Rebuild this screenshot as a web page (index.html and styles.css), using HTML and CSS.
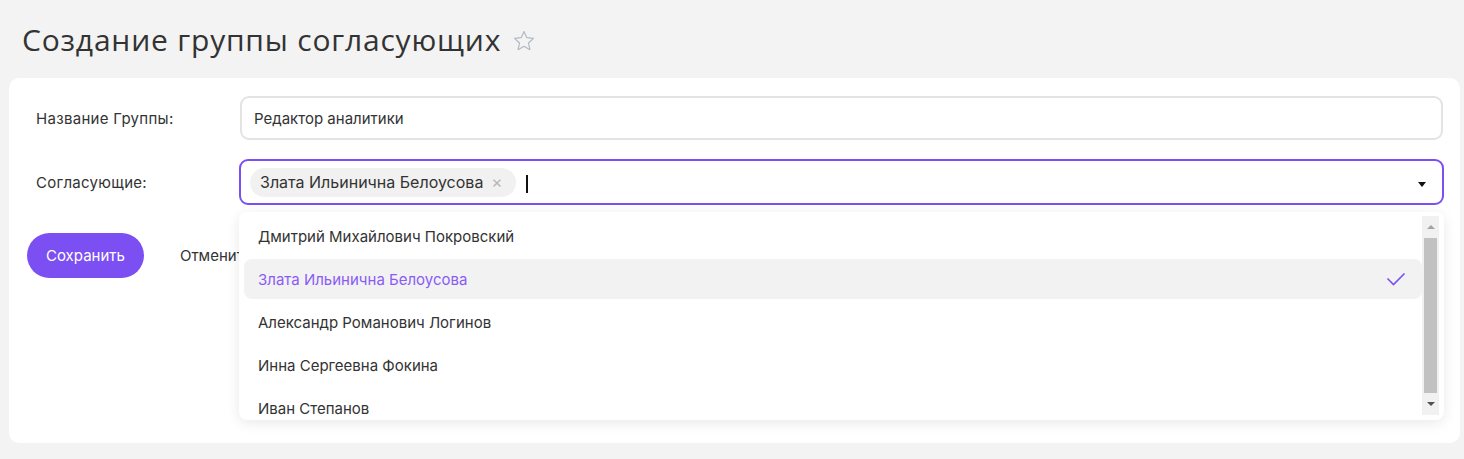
FILE: index.html
```html
<!DOCTYPE html>
<html lang="ru">
<head>
    <meta charset="UTF-8">
    <meta name="viewport" content="width=device-width, initial-scale=1.0">
    <title>Создание группы согласующих</title>
    <link rel="stylesheet" href="styles.css">
</head>
<body>
    <h1 class="page-title">
        Создание группы согласующих
        <svg class="star" width="24" height="24" viewBox="0 0 24 24">
            <path d="M12 2.5l2.8 6.2 6.7.7-5 4.6 1.4 6.7L12 17.3l-5.9 3.4 1.4-6.7-5-4.6 6.7-.7z" fill="none" stroke="#b3b9c2" stroke-width="1.2" stroke-linejoin="round"/>
        </svg>
    </h1>

    <div class="card">
        <form class="group-form">
            <label class="form-label" for="group-name">Название Группы:</label>
            <input class="text-input" type="text" id="group-name" value="Редактор аналитики">

            <label class="form-label">Согласующие:</label>
            <div class="select-wrap">
                <div class="select-box">
                    <span class="tag">Злата Ильинична Белоусова <span class="tag-remove">×</span></span>
                    <span class="cursor"></span>
                    <span class="select-arrow"></span>
                </div>

                <div class="dropdown">
                    <ul class="options">
                        <li class="option">Дмитрий Михайлович Покровский</li>
                        <li class="option selected">Злата Ильинична Белоусова
                            <svg width="20" height="14" viewBox="0 0 20 14"><path d="M1.5 6.5l6 6 11-11" fill="none" stroke="#7b4ff2" stroke-width="1.6"/></svg>
                        </li>
                        <li class="option">Александр Романович Логинов</li>
                        <li class="option">Инна Сергеевна Фокина</li>
                        <li class="option">Иван Степанов</li>
                    </ul>
                    <div class="scrollbar">
                        <span class="arrow-up"></span>
                        <span class="thumb"></span>
                        <span class="arrow-down"></span>
                    </div>
                </div>
            </div>

            <div class="actions">
                <button type="submit" class="save-btn">Сохранить</button>
                <button type="button" class="cancel-btn">Отменить</button>
            </div>
        </form>
    </div>
</body>
</html>
```

FILE: styles.css
```css
body {
    margin: 0;
    background-color: #f3f3f3;
    font-family: Inter, "Noto Sans", sans-serif;
    color: #333;
}
.page-title {
    display: flex;
    align-items: center;
    gap: 11px;
    margin: 0;
    padding: 15px 22px 0;
    height: 63px;
    box-sizing: border-box;
    font-family: "Open Sans", sans-serif;
    font-weight: 400;
    font-size: 30px;
    letter-spacing: 0.8px;
    color: #333;
}
.star {
    margin-top: 4px;
}
.card {
    background-color: #fff;
    border-radius: 10px;
    margin: 15px 4px 0 9px;
    padding: 18px 17px 0 27px;
    height: 365px;
    box-sizing: border-box;
}
.group-form {
    display: grid;
    grid-template-columns: 204px 1fr;
    row-gap: 19px;
    align-items: center;
}
.form-label {
    font-size: 15px;
    letter-spacing: 0.3px;
    color: #333;
}
.text-input {
    height: 44px;
    box-sizing: border-box;
    border: 2px solid #e3e3e3;
    border-radius: 9px;
    padding: 0 12px;
    font-family: inherit;
    font-size: 15px;
    color: #333;
    outline: none;
}
.select-wrap {
    position: relative;
    margin-left: -1px;
    margin-right: -1px;
}
.select-box {
    display: flex;
    align-items: center;
    height: 46px;
    box-sizing: border-box;
    border: 2px solid #7b4ff2;
    border-radius: 9px;
    padding: 0 16px 0 9px;
}
.tag {
    display: inline-flex;
    align-items: center;
    gap: 8px;
    height: 29px;
    padding: 0 13px 0 10px;
    background-color: #f1f1f1;
    border-radius: 15px;
    font-size: 16px;
    color: #333;
}
.tag-remove {
    color: #b5b5b5;
    font-size: 17px;
}
.cursor {
    width: 2px;
    height: 18px;
    background-color: #111;
    margin-left: 10px;
    margin-top: 4px;
}
.select-arrow {
    margin-left: auto;
    margin-top: 4px;
    border-left: 4px solid transparent;
    border-right: 4px solid transparent;
    border-top: 5px solid #111;
}
.dropdown {
    position: absolute;
    top: 53px;
    left: 0;
    right: 0;
    height: 208px;
    display: flex;
    padding: 4px 5px 4px 5px;
    box-sizing: border-box;
    background-color: #fff;
    border-radius: 8px;
    box-shadow: 0 3px 14px rgba(0, 0, 0, 0.09);
    overflow: hidden;
}
.options {
    flex: 1;
    list-style: none;
    margin: 0;
    padding: 0;
    display: flex;
    flex-direction: column;
    gap: 3px;
}
.option {
    display: flex;
    align-items: center;
    justify-content: space-between;
    flex-shrink: 0;
    height: 40px;
    padding: 0 16px 0 14px;
    border-radius: 8px;
    font-size: 15px;
    color: #333;
}
.option.selected {
    background-color: #f2f2f2;
    color: #8a5cf6;
}
.scrollbar {
    width: 17px;
    display: flex;
    flex-direction: column;
    align-items: center;
    background-color: #f1f1f1;
    margin-bottom: 1px;
}
.thumb {
    width: 13px;
    height: 155px;
    background-color: #c1c1c1;
}
.arrow-up, .arrow-down {
    flex: 1;
    display: flex;
    align-items: center;
}
.arrow-up::before {
    content: "";
    border-left: 4px solid transparent;
    border-right: 4px solid transparent;
    border-bottom: 4px solid #a3a3a3;
}
.arrow-down::before {
    content: "";
    border-left: 4px solid transparent;
    border-right: 4px solid transparent;
    border-top: 4px solid #505050;
}
.actions {
    grid-column: 1 / -1;
    display: flex;
    align-items: center;
    gap: 36px;
    margin: 9px 0 0 -9px;
}
.save-btn {
    height: 45px;
    padding: 0 19px;
    background-color: #7b4ff2;
    color: #fff;
    border: none;
    border-radius: 23px;
    font-family: inherit;
    font-size: 15px;
    cursor: pointer;
}
.cancel-btn {
    background: none;
    border: none;
    padding: 0;
    font-family: inherit;
    font-size: 15px;
    color: #333;
    cursor: pointer;
}
```
